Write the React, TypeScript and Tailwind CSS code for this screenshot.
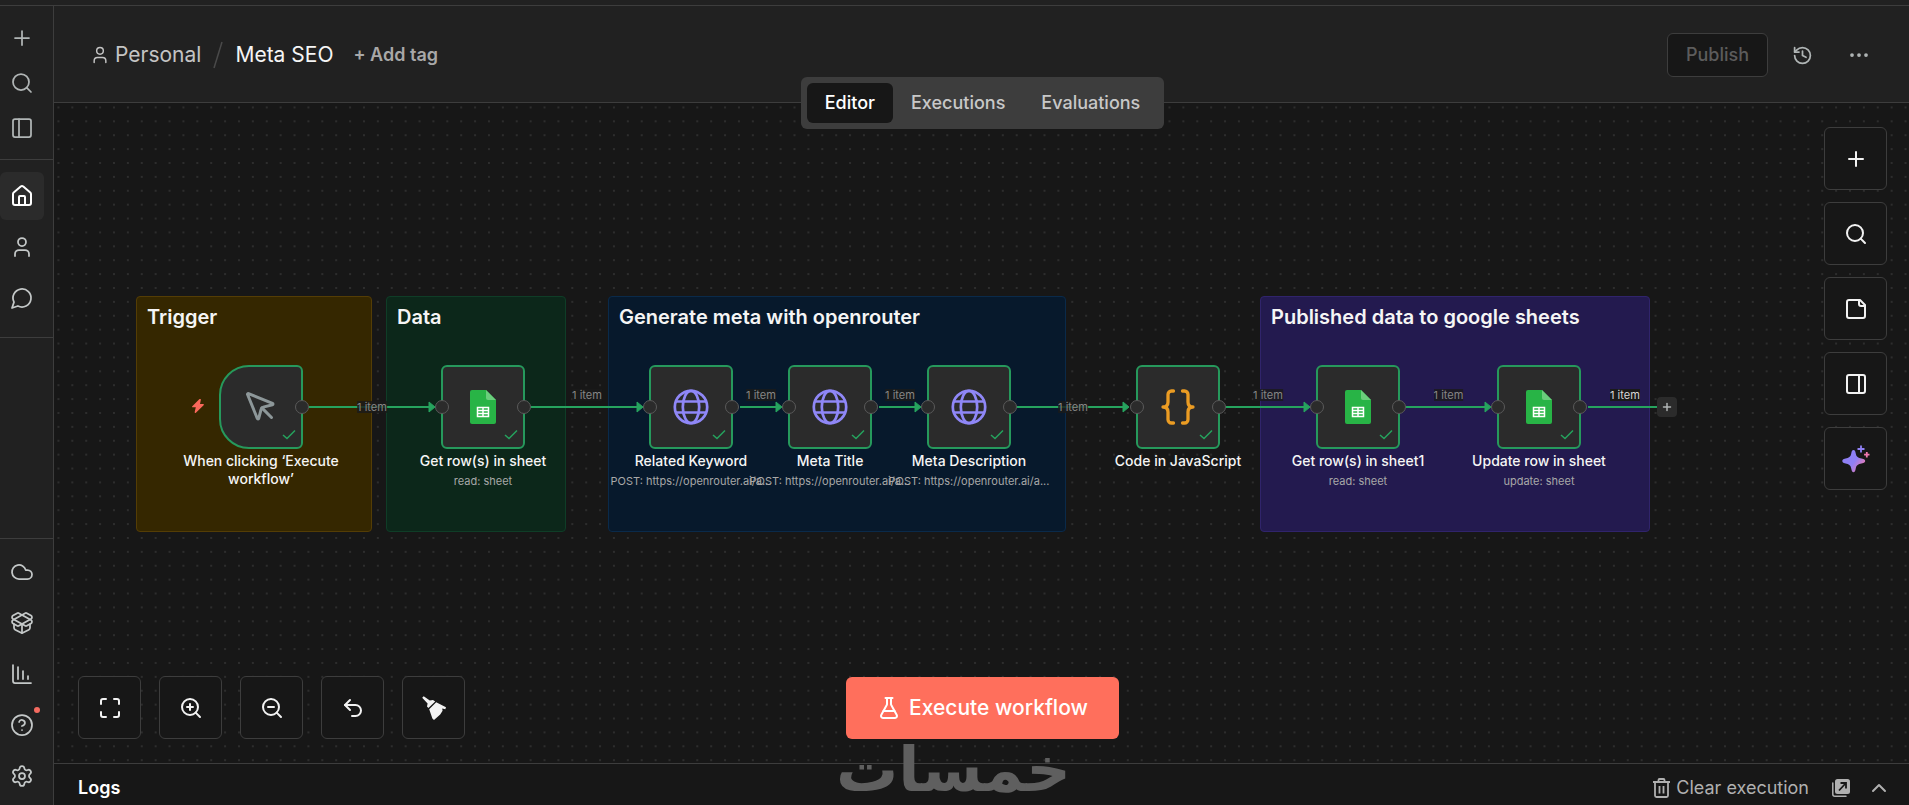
import type { ReactNode } from 'react';
import {
  ChartColumnDecreasing,
  ChevronUp,
  CircleQuestionMark,
  Cloud,
  Ellipsis,
  FlaskConical,
  History,
  House,
  Maximize,
  MousePointer,
  PackageOpen,
  PanelLeft,
  PanelRight,
  Plus,
  Search,
  Settings,
  Undo2,
  User,
  ZoomIn,
  ZoomOut,
} from 'lucide-react';

// canvas zoom level, the grid step is 16px at 100%
const ZOOM = 0.868;
const GRID = 16 * ZOOM;
const WIRE_Y = 304;

type NodeKind = 'trigger' | 'sheets' | 'http' | 'code';

interface FlowNode {
  x: number;
  kind: NodeKind;
  name: string;
  sub?: string;
}

const stickies = [
  { x: 82, w: 236, title: 'Trigger', color: 'bg-[#352700] border-[#543d05]' },
  { x: 332, w: 180, title: 'Data', color: 'bg-[#0c271a] border-[#0f3d27]' },
  { x: 554, w: 458, title: 'Generate meta with openrouter', color: 'bg-[#07192c] border-[#0a2a4a]' },
  { x: 1206, w: 390, title: 'Published data to google sheets', color: 'bg-[#231a4f] border-[#30246b]' },
];

const nodes: FlowNode[] = [
  { x: 165, kind: 'trigger', name: 'When clicking ‘Execute workflow’' },
  { x: 387, kind: 'sheets', name: 'Get row(s) in sheet', sub: 'read: sheet' },
  { x: 595, kind: 'http', name: 'Related Keyword', sub: 'POST: https://openrouter.ai/a...' },
  { x: 734, kind: 'http', name: 'Meta Title', sub: 'POST: https://openrouter.ai/a...' },
  { x: 873, kind: 'http', name: 'Meta Description', sub: 'POST: https://openrouter.ai/a...' },
  { x: 1082, kind: 'code', name: 'Code in JavaScript' },
  { x: 1262, kind: 'sheets', name: 'Get row(s) in sheet1', sub: 'read: sheet' },
  { x: 1443, kind: 'sheets', name: 'Update row in sheet', sub: 'update: sheet' },
];

// labels sit on the wire when inline, above it otherwise
const edges = [
  { from: 255, to: 381, inline: true },
  { from: 477, to: 589, inline: false },
  { from: 686, to: 728, inline: false },
  { from: 825, to: 867, inline: false },
  { from: 963, to: 1075, inline: true },
  { from: 1172, to: 1256, inline: false },
  { from: 1352, to: 1437, inline: false },
];

function MessageIcon() {
  return (
    <svg width="24" height="24" viewBox="0 0 24 24" fill="none" stroke="currentColor" strokeWidth="1.750" strokeLinecap="round" strokeLinejoin="round">
      <path d="M7.9 20A9 9 0 1 0 4 16.1L2 22Z" />
    </svg>
  );
}

function StickyIcon() {
  return (
    <svg width="24" height="24" viewBox="0 0 24 24" fill="none" stroke="currentColor" strokeWidth="2" strokeLinecap="round" strokeLinejoin="round">
      <path d="M16 3H5a2 2 0 0 0-2 2v14a2 2 0 0 0 2 2h14a2 2 0 0 0 2-2V8Z" />
      <path d="M15 3v4a2 2 0 0 0 2 2h4" />
    </svg>
  );
}

function BroomIcon() {
  return (
    <svg width="24" height="24" viewBox="0 0 24 24" fill="currentColor">
      <path d="M0.200 1.700 1.700 0.200 7.800 4.600 11 4 13.200 5.400 6.400 12 5 10.600 5.600 7.600Z" />
      <path d="M14.200 6.300 24 11.200 23.300 13.200 20.200 12.600 20.600 14.800 18.200 18.600 12 24 10.400 22.600 7.200 13.200Z" />
    </svg>
  );
}

function SparklesIcon() {
  return (
    <svg width="28" height="28" viewBox="0 0 28 28">
      <defs>
        <linearGradient id="spark" x1="0" y1="0" x2="1" y2="0.700">
          <stop offset="0.600" stopColor="#8f80f4" />
          <stop offset="1" stopColor="#f07ab0" />
        </linearGradient>
      </defs>
      <path
        d="M11.500 5c1.300 0 1.800 1.200 2.200 3.200.6 3 1.500 4.200 4.700 5 3.200.7 4.800 1.200 4.800 2.800s-1.600 2.100-4.800 2.800c-3.200.8-4.100 2-4.700 5-.4 2-.9 3.400-2.200 3.400s-1.800-1.400-2.200-3.400c-.6-3-1.500-4.200-4.700-5C1.600 18.100.3 17.600.3 16s1.300-2.100 4.300-2.800c3.200-.8 4.100-2 4.700-5C9.700 6.200 10.200 5 11.500 5Z"
        fill="url(#spark)"
      />
      <path d="M19 0.500v7M15.500 4h7" stroke="#8f80f4" strokeWidth="1.800" />
      <path d="M24.800 7v5.400M22.100 9.700h5.400" stroke="#f07ab0" strokeWidth="1.800" />
    </svg>
  );
}

function TrashIcon() {
  return (
    <svg width="17" height="20" viewBox="0 0 17 20" fill="none" stroke="currentColor" strokeWidth="1.800" strokeLinejoin="round">
      <path d="M0 4h17M5.500 4V2a1 1 0 0 1 1-1h4a1 1 0 0 1 1 1v2M2 4v13.500a1.500 1.500 0 0 0 1.500 1.500h10a1.500 1.500 0 0 0 1.500-1.500V4M6.500 8v7.500M10.500 8v7.500" />
    </svg>
  );
}

function PopOutIcon() {
  return (
    <svg width="20" height="20" viewBox="0 0 20 20" fill="none">
      <path d="M1.800 5v11.200a2 2 0 0 0 2 2H15" stroke="currentColor" strokeWidth="1.500" strokeLinecap="round" />
      <rect x="4" y="1" width="15" height="15" rx="2.500" fill="currentColor" />
      <path d="M8 12.500 14.500 5.500M9.500 5h5.500v5.500" stroke="#171717" strokeWidth="1.800" />
    </svg>
  );
}

function SheetsIcon() {
  return (
    <svg width="26" height="34" viewBox="0 0 26 34">
      <path d="M2 0h14l10 10v22a2 2 0 0 1-2 2H2a2 2 0 0 1-2-2V2a2 2 0 0 1 2-2Z" fill="#28b446" />
      <path d="M16 0 26 10h-8a2 2 0 0 1-2-2Z" fill="#6ace7c" />
      <path d="M7.500 17.500h11v9h-11zM7.500 20.500h11M7.500 23.500h11M13 17.500v9" fill="none" stroke="#fff" strokeWidth="1.500" />
    </svg>
  );
}

function GlobeIcon() {
  return (
    <svg width="36" height="36" viewBox="0 0 36 36" fill="none" stroke="#8f87f7" strokeWidth="2.700">
      <circle cx="18" cy="18" r="16.200" />
      <ellipse cx="18" cy="18" rx="8.200" ry="16.200" />
      <path d="M3 12.500h30M3 23.500h30" />
    </svg>
  );
}

function BracesIcon() {
  return (
    <svg width="36" height="36" viewBox="0 0 36 36" fill="none" stroke="#eb9c23" strokeWidth="3.300" strokeLinecap="round" strokeLinejoin="round">
      <path d="M13.500 2H11.500a3.500 3.500 0 0 0-3.500 3.500v7.500c0 3-1.500 5-5 5 3.500 0 5 2 5 5v7.500A3.500 3.500 0 0 0 11.500 34h2" />
      <path d="M22.500 2h2A3.500 3.500 0 0 1 28 5.500V13c0 3 1.500 5 5 5-3.500 0-5 2-5 5v7.500a3.500 3.500 0 0 1-3.500 3.500h-2" />
    </svg>
  );
}

const nodeIcons: Record<NodeKind, ReactNode> = {
  trigger: <MousePointer size={36} strokeWidth={2} color="#8d9799" />,
  sheets: <SheetsIcon />,
  http: <GlobeIcon />,
  code: <BracesIcon />,
};

function SideButton({ label, active, children }: { label: string; active?: boolean; children: ReactNode }) {
  return (
    <button
      aria-label={label}
      className={`relative flex h-12 w-11 items-center justify-center rounded-md ${
        active ? 'bg-[#2b2b2b] text-white' : 'text-[#c4c8c8]'
      }`}
    >
      {children}
    </button>
  );
}

function CanvasButton({ label, children }: { label: string; children: ReactNode }) {
  return (
    <button
      aria-label={label}
      className="flex size-[63px] items-center justify-center rounded-md border border-[#3d3d3d] bg-[#171717] text-[#f2f2f2]"
    >
      {children}
    </button>
  );
}

function Handle({ side }: { side: 'left' | 'right' }) {
  return (
    <span
      className={`absolute top-[35px] size-[14px] rounded-full border border-[#5a5a5a] bg-[#2b2b2b] ${
        side === 'left' ? '-left-1.5' : '-right-1.5'
      }`}
    />
  );
}

function Sidebar() {
  return (
    <nav className="flex w-[54px] shrink-0 flex-col border-r border-[#3d3d3d] bg-[#212121]">
      <div className="flex h-[154px] flex-col justify-between border-b border-[#3d3d3d] pt-2 pb-[7px] text-[#b0b5b5]">
        <button aria-label="Create" className="flex h-12 w-11 items-center justify-center"><Plus size={24} strokeWidth={1.75} /></button>
        <button aria-label="Search" className="flex h-10 w-11 items-center justify-center"><Search size={24} strokeWidth={1.75} /></button>
        <button aria-label="Toggle sidebar" className="flex h-12 w-11 items-center justify-center"><PanelLeft size={24} strokeWidth={1.75} /></button>
      </div>
      <div className="flex flex-col gap-[3px] border-b border-[#3d3d3d] pt-3 pb-[15px]">
        <SideButton label="Overview" active><House size={24} strokeWidth={2} /></SideButton>
        <SideButton label="Personal"><User size={24} strokeWidth={1.75} /></SideButton>
        <SideButton label="Chat"><MessageIcon /></SideButton>
      </div>
      <div className="mt-auto flex flex-col gap-[3px] border-t border-[#3d3d3d] pt-[9px] pb-[5px]">
        <SideButton label="Admin panel"><Cloud size={24} strokeWidth={1.75} /></SideButton>
        <SideButton label="Templates"><PackageOpen size={24} strokeWidth={1.75} /></SideButton>
        <SideButton label="Insights"><ChartColumnDecreasing size={24} strokeWidth={1.75} /></SideButton>
        <SideButton label="Help">
          <CircleQuestionMark size={24} strokeWidth={1.75} />
          <span className="absolute top-1.5 right-1 size-1.5 rounded-full bg-[#f56b60]" />
        </SideButton>
        <SideButton label="Settings"><Settings size={24} strokeWidth={1.75} /></SideButton>
      </div>
    </nav>
  );
}

function Header() {
  return (
    <header className="relative z-10 flex h-[97px] shrink-0 items-center justify-between border-b border-[#3d3d3d] bg-[#212121] pt-0.5 pr-[38px] pl-9">
      <div className="flex items-center text-[21px] leading-7">
        <a href="#personal" className="flex items-center gap-[5px] text-[#c4c4c4]">
          <User size={20} strokeWidth={1.75} />
          Personal
        </a>
        <svg width="10" height="28" viewBox="0 0 10 28" className="mx-3" stroke="#4a4a4a" strokeWidth="1.500">
          <path d="M1 27 9 1" />
        </svg>
        <h1 className="text-[#f5f5f5]">Meta SEO</h1>
        <button className="ml-5 text-lg font-semibold text-[#a8a8a8]">+ Add tag</button>
      </div>
      <div className="flex items-center text-[#b0b5b5]">
        <button className="h-11 rounded-md border border-[#3d3d3d] bg-[#171717] px-[18px] text-lg font-medium text-[#5c5c5c]" disabled>
          Publish
        </button>
        <button aria-label="History" className="ml-6"><History size={21} strokeWidth={2} /></button>
        <button aria-label="More" className="ml-[34px]"><Ellipsis size={24} strokeWidth={1.75} /></button>
      </div>
      <div className="absolute right-0 -bottom-[27px] left-0.5 flex justify-center">
        <div role="tablist" className="flex rounded-md bg-[#3d3d3d] p-1.5 text-lg font-medium text-[#c8c8c8]">
          <button role="tab" aria-selected="true" className="h-10 rounded-md bg-[#171717] px-[18px] text-white">Editor</button>
          <button role="tab" aria-selected="false" className="h-10 px-[18px]">Executions</button>
          <button role="tab" aria-selected="false" className="h-10 px-[18px]">Evaluations</button>
        </div>
      </div>
    </header>
  );
}

function Workflow() {
  return (
    <>
      {stickies.map((s) => (
        <section
          key={s.title}
          className={`absolute top-[193px] h-[236px] rounded-sm border px-2.5 py-1.5 ${s.color}`}
          style={{ left: s.x, width: s.w }}
        >
          <h2 className="text-xl leading-7 font-semibold whitespace-nowrap text-[#f5f5f5]">{s.title}</h2>
        </section>
      ))}

      <svg className="absolute inset-0 h-full w-full" fill="#26a35e" stroke="#26a35e">
        {edges.map((e) => (
          <g key={e.from}>
            <path d={`M${e.from} ${WIRE_Y}H${e.to - 4}`} strokeWidth="2" />
            <path d={`M${e.to - 6} ${WIRE_Y - 5}L${e.to} ${WIRE_Y}L${e.to - 6} ${WIRE_Y + 5}Z`} strokeWidth="1" strokeLinejoin="round" />
          </g>
        ))}
        <path d={`M1534 ${WIRE_Y}H1603`} strokeWidth="2" />
      </svg>

      {edges.map((e) => (
        <span
          key={e.from}
          className={`absolute -translate-x-1/2 bg-[#1a1a1a]/80 text-[11px] leading-3 whitespace-nowrap text-[#868686] ${
            e.inline ? 'top-[298px]' : 'top-[286px]'
          }`}
          style={{ left: (e.from + e.to) / 2 }}
        >
          1 item
        </span>
      ))}
      <span className="absolute top-[286px] left-[1556px] bg-[#1a1a1a] text-[11px] leading-3 whitespace-nowrap text-[#d8d8d8]">1 item</span>

      <svg className="absolute top-[296px] left-[138px]" width="12" height="14" viewBox="0 0 12 14" fill="#f9685b">
        <path d="M7.500 0 0.300 7.200c-.5.500-.2 1.100.4 1.100h3.100L2.700 13c-.2.900.6 1.300 1.200.7l7.700-7.400c.6-.6.300-1.200-.4-1.200H8L8.800 1C9-.1 8.200-.6 7.500 0Z" />
      </svg>

      {nodes.map((n) => (
        <div key={n.x} className="absolute top-[262px] size-[84px]" style={{ left: n.x }}>
          <div
            className={`flex size-full items-center justify-center border-2 border-[#26995c] bg-[#2b2b2b] ${
              n.kind === 'trigger' ? 'rounded-l-[30px] rounded-r-md' : 'rounded-md'
            }`}
          >
            {nodeIcons[n.kind]}
          </div>
          <svg className="absolute right-[7px] bottom-2" width="14" height="12" viewBox="0 0 14 12" fill="none" stroke="#26a35e" strokeWidth="1.500">
            <path d="M1 6 5 9.500 13 1.500" />
          </svg>
          {n.kind !== 'trigger' && <Handle side="left" />}
          <Handle side="right" />
          <div className="absolute top-full left-1/2 mt-[3px] flex w-40 -translate-x-1/2 flex-col items-center gap-[3px] text-center">
            <span className="text-sm leading-[18px] font-medium text-[#f5f5f5]">{n.name}</span>
            {n.sub && <span className="text-[11px] leading-4 whitespace-nowrap text-[#a8a8a8]">{n.sub}</span>}
          </div>
        </div>
      ))}

      <button aria-label="Add node" className="absolute top-[294px] left-[1603px] flex size-5 items-center justify-center rounded bg-[#2b2b2b] text-[#b0b5b5]">
        <Plus size={12} strokeWidth={3} />
      </button>
    </>
  );
}

export default function App() {
  return (
    <div className="flex h-screen flex-col overflow-hidden bg-[#171717] font-['Inter',sans-serif]">
      <div className="h-1.5 shrink-0 border-b border-[#3d3d3d] bg-[#212121]" />
      <div className="flex min-h-0 flex-1">
        <Sidebar />
        <div className="relative flex min-w-0 flex-1 flex-col">
          <Header />
          <main className="relative min-h-0 flex-1 overflow-hidden">
            <svg className="absolute inset-0 h-full w-full">
              <pattern id="dots" x="-2.500" y="-2.500" width={GRID} height={GRID} patternUnits="userSpaceOnUse">
                <circle cx={GRID / 2} cy={GRID / 2} r="0.650" fill="#565656" />
              </pattern>
              <rect width="100%" height="100%" fill="url(#dots)" />
            </svg>

            <Workflow />

            <div className="absolute top-6 right-[22px] flex flex-col gap-3">
              <CanvasButton label="Add node"><Plus size={24} strokeWidth={2} /></CanvasButton>
              <CanvasButton label="Search"><Search size={24} strokeWidth={2} /></CanvasButton>
              <CanvasButton label="Add sticky note"><StickyIcon /></CanvasButton>
              <CanvasButton label="Open panel"><PanelRight size={24} strokeWidth={2} /></CanvasButton>
              <CanvasButton label="Assistant"><SparklesIcon /></CanvasButton>
            </div>

            <div className="absolute bottom-6 left-6 flex gap-[18px]">
              <CanvasButton label="Zoom to fit"><Maximize size={24} strokeWidth={2} /></CanvasButton>
              <CanvasButton label="Zoom in"><ZoomIn size={24} strokeWidth={2} /></CanvasButton>
              <CanvasButton label="Zoom out"><ZoomOut size={24} strokeWidth={2} /></CanvasButton>
              <CanvasButton label="Undo"><Undo2 size={24} strokeWidth={2} /></CanvasButton>
              <CanvasButton label="Tidy up"><BroomIcon /></CanvasButton>
            </div>

            <div className="absolute right-0 bottom-6 left-0.5 flex justify-center">
              <button className="flex h-[62px] items-center gap-2 rounded-md bg-[#ff6f5c] px-[31px] text-[21px] font-medium text-white">
                <FlaskConical size={24} strokeWidth={2} />
                Execute workflow
              </button>
            </div>
          </main>

          <footer className="flex h-[42px] shrink-0 items-center justify-between border-t border-[#3d3d3d] pt-1.5 pr-[18px] pl-6 text-lg">
            <h2 className="font-semibold text-white">Logs</h2>
            <div className="flex items-center text-[#b0b0b0]">
              <button className="flex items-center gap-1.5">
                <TrashIcon />
                Clear execution
              </button>
              <button aria-label="Pop out" className="ml-[22px]"><PopOutIcon /></button>
              <button aria-label="Expand logs" className="ml-4"><ChevronUp size={24} strokeWidth={2} /></button>
            </div>
          </footer>

          <div className="pointer-events-none absolute inset-x-0 bottom-1 flex justify-center">
            <span lang="ar" dir="rtl" className="mr-14 font-['DejaVu_Sans',sans-serif] text-[62px] leading-[62px] font-bold text-[#5f5f5f]">
              خمسات
            </span>
          </div>
        </div>
      </div>
    </div>
  );
}
